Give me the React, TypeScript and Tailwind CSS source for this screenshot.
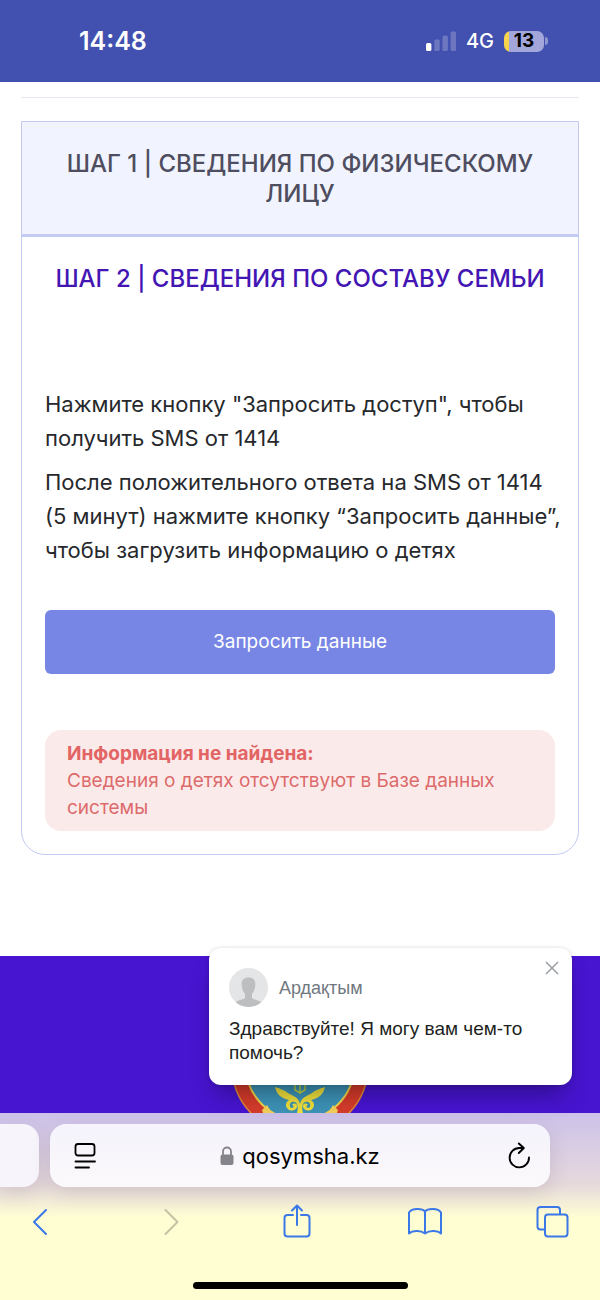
import type { ReactNode } from "react";

function SignalIcon() {
  return (
    <svg width="30" height="20" viewBox="0 0 30 20" fill="#fff" aria-hidden="true">
      <rect x="0" y="12" width="5.4" height="8" rx="1.5" />
      <g opacity="0.22">
        <rect x="8.3" y="8.5" width="5.4" height="11.5" rx="1.5" />
        <rect x="16.5" y="4.5" width="5.4" height="15.5" rx="1.5" />
        <rect x="24.6" y="0.5" width="5.4" height="19.5" rx="1.5" />
      </g>
    </svg>
  );
}

function StatusBar() {
  return (
    <header className="flex h-[82px] items-center justify-between bg-[#4251af] pr-[52px] pl-[79px] text-white">
      <time className="text-[25px] leading-8 font-semibold">14:48</time>
      <div className="flex items-center gap-[10px]">
        <SignalIcon />
        <span className="text-xl leading-6 font-medium">4G</span>
        <div className="flex items-center gap-px">
          <span className="flex h-[21px] w-10 items-center justify-center rounded-[7px] bg-linear-to-r from-[#f8d34c] from-[13%] to-[#a3a6da] to-[13%] text-[19px] leading-5 font-bold text-black">
            13
          </span>
          <span className="h-2 w-[3px] rounded-r-full bg-[#8f95cf]" />
        </div>
      </div>
    </header>
  );
}

function StepsCard() {
  return (
    <section className="mt-[23px] rounded-b-3xl border border-[#c3c9f1]">
      <h2 className="border-b-[3px] border-[#c3cbf5] bg-[#f1f4fe] px-8 pt-[27px] pb-[25px] text-center text-2xl leading-[30px] font-medium text-[#4f4d60]">
        ШАГ 1 | СВЕДЕНИЯ ПО ФИЗИЧЕСКОМУ ЛИЦУ
      </h2>
      <h2 className="px-4 pt-[27px] text-center text-2xl leading-[30px] font-medium text-[#4316b4]">
        ШАГ 2 | СВЕДЕНИЯ ПО СОСТАВУ СЕМЬИ
      </h2>

      <div className="px-[23px] pt-[93px] pb-[23px]">
        <div className="-mr-2 flex flex-col gap-[10px] text-[22px] leading-[34px] text-[#26282c]">
          <p>Нажмите кнопку "Запросить доступ", чтобы получить SMS от 1414</p>
          <p>
            После положительного ответа на SMS от 1414 (5 минут) нажмите кнопку “Запросить данные”,
            чтобы загрузить информацию о детях
          </p>
        </div>

        <button
          type="button"
          className="mt-[43px] h-16 w-full rounded-md bg-[#7786e5] text-[19px] text-white"
        >
          Запросить данные
        </button>

        <div
          role="alert"
          className="mt-14 rounded-2xl bg-[#fbeaea] px-[22px] py-[10px] text-[19px] leading-[27px] text-[#dd6b6b]"
        >
          <strong className="block font-bold text-[#e26464]">Информация не найдена:</strong>
          Сведения о детях отсутствуют в Базе данных системы
        </div>
      </div>
    </section>
  );
}

function ChatPopup() {
  return (
    <aside className="absolute -top-2 right-7 w-[363px] rounded-xl bg-white p-5 font-['Liberation_Sans',sans-serif] shadow-[0_0_4px_rgba(0,0,0,0.15),0_16px_24px_-8px_rgba(0,0,0,0.35)]">
      <div className="flex items-center gap-[11px]">
        <svg width="39" height="39" viewBox="0 0 39 39" aria-hidden="true">
          <clipPath id="avatar">
            <circle cx="19.5" cy="19.5" r="19.5" />
          </clipPath>
          <g clipPath="url(#avatar)">
            <rect width="39" height="39" fill="#e4e5e6" />
            <path
              d="M19.5 9.5c-4.8 0-7 2.7-6.8 7 .1 4 1.2 7.2 3.3 9.3v4.2c-1.5 1.8-6.5 1.6-9.5 4.5V39h26v-4.5c-3-2.9-8-2.7-9.5-4.5v-4.2c2.1-2.1 3.2-5.3 3.3-9.3.2-4.3-2-7-6.8-7z"
              fill="#bcbec0"
            />
          </g>
        </svg>
        <span className="text-lg leading-6 text-[#6f7880]">Ардақтым</span>
      </div>
      <p className="mt-[10px] text-[19px] leading-6 text-[#1d1f22]">
        Здравствуйте! Я могу вам чем-то помочь?
      </p>
      <button type="button" aria-label="Закрыть" className="absolute top-3 right-3 p-px">
        <svg width="14" height="14" viewBox="0 0 14 14" stroke="#9a9fa6" strokeWidth="1.5">
          <path d="M1 1l12 12M13 1L1 13" />
        </svg>
      </button>
    </aside>
  );
}

function Emblem() {
  return (
    <svg width="138" height="116" viewBox="0 0 138 116" aria-hidden="true">
      <circle cx="69" cy="69" r="68" fill="#d63b2b" stroke="#e08a35" strokeWidth="1.5" />
      <circle cx="69" cy="69" r="54" fill="#3d93b8" stroke="#f3d34a" strokeWidth="2" />
      {/* ribbon tips under the shield */}
      <path d="M31 113l5-5 5 8h-9zM107 113l-5-5-5 8h9z" fill="#f2cf58" />
      {/* wings */}
      <g fill="#f0e03c">
        <path d="M44 90c2 8 6 11 14 13-3 2-4 5-2 8 3 4 9 3 10-1 1-3-3-5-5-2 2 0 2 3 0 3-3 0-3-5 0-6 5-1 7 4 5 11h3v-9c-2-8-8-8-12-11-4-3-7-4-13-6z" />
        <path d="M94 90c-2 8-6 11-14 13 3 2 4 5 2 8-3 4-9 3-10-1-1-3 3-5 5-2-2 0-2 3 0 3 3 0 3-5 0-6-5-1-7 4-5 11h-3v-9c2-8 8-8 12-11 4-3 7-4 13-6z" />
      </g>
      <path
        d="M69 86v11M64 88v5l5 3 5-3v-5"
        fill="none"
        stroke="#b9d140"
        strokeWidth="1.5"
      />
    </svg>
  );
}

function NavButton({ label, disabled, children }: { label: string; disabled?: boolean; children: ReactNode }) {
  return (
    <button
      type="button"
      aria-label={label}
      disabled={disabled}
      className="flex size-9 items-center justify-center text-[#3b78e7] disabled:text-[#c4c1a4]"
    >
      <svg
        width="36"
        height="36"
        viewBox="0 0 36 36"
        fill="none"
        stroke="currentColor"
        strokeWidth="2"
        strokeLinecap="round"
        strokeLinejoin="round"
      >
        {children}
      </svg>
    </button>
  );
}

function BrowserBar() {
  return (
    <footer className="overflow-hidden bg-linear-to-b from-[#cdc1ea] via-[#e6d9dc] via-[38%] to-[#fffed2] to-[56%] pt-[11px] pb-[11px]">
      <div className="flex gap-[11px] pr-[50px]">
        <div className="w-[39px] rounded-r-2xl bg-[#f7f5fb] shadow-[0_6px_20px_rgba(80,60,90,0.15)]" />
        <div className="flex h-[63px] flex-1 items-center justify-between rounded-2xl bg-linear-to-b from-[#f5f3fc] to-[#fbf9fa] pr-[15px] pl-[19px] shadow-[0_6px_20px_rgba(80,60,90,0.15)]">
          <button type="button" aria-label="Меню страницы" className="py-1 pl-1">
            <svg width="24" height="28" viewBox="0 0 24 28" fill="none" stroke="#000" strokeWidth="1.8" strokeLinecap="round">
              <rect x="2.5" y="2" width="19" height="11.5" rx="2.5" />
              <path d="M2.5 19.5H22M2.5 25.5H16" />
            </svg>
          </button>
          <button type="button" className="flex items-center gap-2 text-[22px] leading-7 text-black">
            <svg width="14" height="20" viewBox="0 0 14 20" aria-hidden="true">
              <path d="M3 9V5.5a4 4 0 0 1 8 0V9" fill="none" stroke="#86848b" strokeWidth="1.8" />
              <rect x="0.5" y="8.5" width="13" height="10.5" rx="2" fill="#86848b" />
            </svg>
            qosymsha.kz
          </button>
          <button type="button" aria-label="Обновить" className="p-1">
            <svg
              width="24"
              height="28"
              viewBox="0 0 24 28"
              fill="none"
              stroke="#000"
              strokeWidth="1.9"
              strokeLinecap="round"
              strokeLinejoin="round"
            >
              <path d="M22 15.5A9.7 9.7 0 1 1 12.3 6h4" />
              <path d="M11.8 1.5L16.8 6l-5 5" />
            </svg>
          </button>
        </div>
      </div>

      <nav className="mt-[17px] flex justify-between pr-[30px] pl-[22px]">
        <NavButton label="Назад">
          <path d="M24 6L12 18l12 12" />
        </NavButton>
        <NavButton label="Вперёд" disabled>
          <path d="M15.5 6l12 12-12 12" />
        </NavButton>
        <NavButton label="Поделиться">
          <path d="M15 11H9.5a3 3 0 0 0-3 3v15.5a3 3 0 0 0 3 3h19a3 3 0 0 0 3-3V14a3 3 0 0 0-3-3H23M19 21V1.5M14 6.5l5-5 5 5" />
        </NavButton>
        <NavButton label="Закладки">
          <path d="M19 7.5C16 4 6 4 3 8.5v21c4-3.500 12-3 16 0c4-3 12-3.500 16 0v-21C32 4 22 4 19 7.5zM19 7.5v22" />
        </NavButton>
        <NavButton label="Вкладки">
          <path d="M10.5 25.5h-4a3 3 0 0 1-3-3V6a3 3 0 0 1 3-3H23a3 3 0 0 1 3 3v4" />
          <rect x="11" y="10.5" width="22.5" height="22" rx="3" />
        </NavButton>
      </nav>

      <div className="mx-auto mt-[42px] h-[7px] w-[215px] rounded-full bg-black" />
    </footer>
  );
}

export default function App() {
  return (
    <div className="flex min-h-screen flex-col bg-white font-[Inter,sans-serif]">
      <StatusBar />

      <main className="px-[21px] pt-[15px] pb-[101px]">
        <hr className="border-[#e9e8f6]" />
        <StepsCard />
      </main>

      <div className="relative flex flex-1 items-start justify-center bg-[#4714d0] pt-[41px]">
        <Emblem />
        <ChatPopup />
      </div>

      <BrowserBar />
    </div>
  );
}
